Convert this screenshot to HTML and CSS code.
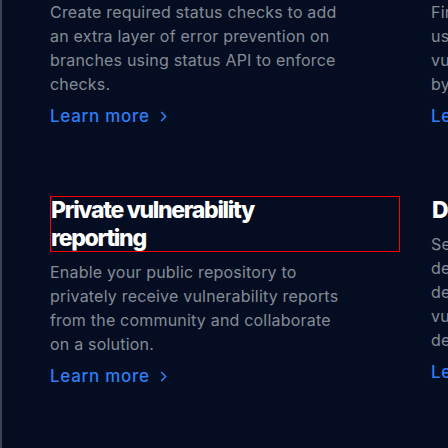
FILE: index.html
```html
<!DOCTYPE html>
<html lang="en">
<head>
<meta charset="utf-8">
<link rel="stylesheet" href="styles.css">
</head>
<body>
<div class="frame">
  <div class="grid">
    <div class="item">
      <p class="desc">Create required status checks to add an extra layer of error prevention on branches using status API to enforce checks.</p>
      <a class="more" href="#">Learn more <svg class="chev" width="7" height="11" viewBox="0 0 7 11"><path d="M1.2 1 L5.6 5.5 L1.2 10" fill="none" stroke="currentColor" stroke-width="1.6"/></svg></a>
    </div>
    <div class="item">
      <p class="desc">Find and fix security issues in code<br>using CodeQL to detect<br>vulnerabilities and errors, backed<br>by the community.</p>
      <a class="more" href="#">Learn more <svg class="chev" width="7" height="11" viewBox="0 0 7 11"><path d="M1.2 1 L5.6 5.5 L1.2 10" fill="none" stroke="currentColor" stroke-width="1.6"/></svg></a>
    </div>
    <div class="item">
      <h3 class="title marked">Private vulnerability reporting</h3>
      <p class="desc">Enable your public repository to privately receive vulnerability reports from the community and collaborate on a solution.</p>
      <a class="more" href="#">Learn more <svg class="chev" width="7" height="11" viewBox="0 0 7 11"><path d="M1.2 1 L5.6 5.5 L1.2 10" fill="none" stroke="currentColor" stroke-width="1.6"/></svg></a>
    </div>
    <div class="item">
      <h3 class="title">Dependency review</h3>
      <p class="desc">See the security impact of new<br>dependency changes in pull requests<br>dependencies with known<br>vulnerabilities before they are<br>deployed to production.</p>
      <a class="more" href="#">Learn more <svg class="chev" width="7" height="11" viewBox="0 0 7 11"><path d="M1.2 1 L5.6 5.5 L1.2 10" fill="none" stroke="currentColor" stroke-width="1.6"/></svg></a>
    </div>
  </div>
</div>
</body>
</html>
```
FILE: styles.css
```css
html, body {
  margin: 0;
  padding: 0;
  background: #040d21;
  width: 448px;
  height: 448px;
  overflow: hidden;
}
body {
  font-family: Inter, "Noto Sans", sans-serif;
  -webkit-font-smoothing: antialiased;
}
.frame {
  border-left: 2px solid #3b4451;
  min-height: 448px;
  padding-left: 48px;
}
.grid {
  display: grid;
  grid-template-columns: 350px 350px;
  column-gap: 31px;
  row-gap: 68px;
  align-items: start;
}
.item {
  display: flex;
  flex-direction: column;
  align-items: flex-start;
}
.title {
  margin: 0 0 8px;
  padding: 0 70px 0 1px;
  font-size: 23px;
  line-height: 28px;
  font-weight: 800;
  letter-spacing: -1.3px;
  color: #ffffff;
  width: 350px;
  box-sizing: border-box;
}
.marked {
  outline: 1px solid #ff0000;
  outline-offset: -1px;
}
.desc {
  margin: 0 0 8px;
  font-size: 16px;
  line-height: 24px;
  letter-spacing: 0.2px;
  color: #848d97;
  max-width: 290px;
}
.item:nth-child(2) .desc,
.item:nth-child(4) .desc {
  max-width: none;
  white-space: nowrap;
}
.more {
  display: inline-flex;
  align-items: center;
  gap: 10px;
  font-size: 17px;
  line-height: 24px;
  font-weight: 500;
  letter-spacing: 0.7px;
  color: #2f7ef6;
  text-decoration: none;
}
.chev {
  display: block;
  margin-top: 1px;
}
```
